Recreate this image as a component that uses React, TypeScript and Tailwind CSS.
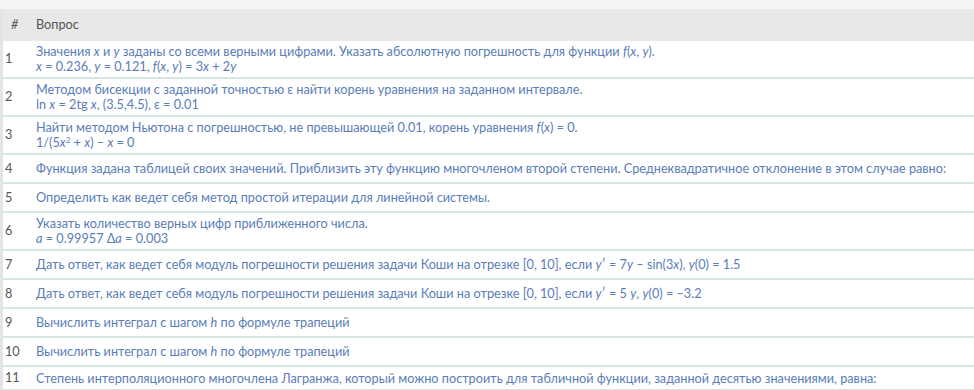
import React from "react";

type Q = { n: number; lines: React.ReactNode[] };

const I = ({ children }: { children: React.ReactNode }) => <i>{children}</i>;

const questions: Q[] = [
  {
    n: 1,
    lines: [
      <>Значения <I>x</I> и <I>y</I> заданы со всеми верными цифрами. Указать абсолютную погрешность для функции <I>f</I>(<I>x</I>, <I>y</I>).</>,
      <><I>x</I> = 0.236, <I>y</I> = 0.121, <I>f</I>(<I>x</I>, <I>y</I>) = 3<I>x</I> + 2<I>y</I></>,
    ],
  },
  {
    n: 2,
    lines: [
      <>Методом бисекции с заданной точностью ε найти корень уравнения на заданном интервале.</>,
      <>ln <I>x</I> = 2tg <I>x</I>, (3.5,4.5), ε = 0.01</>,
    ],
  },
  {
    n: 3,
    lines: [
      <>Найти методом Ньютона с погрешностью, не превышающей 0.01, корень уравнения <I>f</I>(<I>x</I>) = 0.</>,
      <>1/(5<I>x</I><sup className="text-[8px]">2</sup> + <I>x</I>) – <I>x</I> = 0</>,
    ],
  },
  {
    n: 4,
    lines: [
      <>Функция задана таблицей своих значений. Приблизить эту функцию многочленом второй степени. Среднеквадратичное отклонение в этом случае равно:</>,
    ],
  },
  { n: 5, lines: [<>Определить как ведет себя метод простой итерации для линейной системы.</>] },
  {
    n: 6,
    lines: [
      <>Указать количество верных цифр приближенного числа.</>,
      <><I>a</I> = 0.99957 Δ<I>a</I> = 0.003</>,
    ],
  },
  {
    n: 7,
    lines: [
      <>Дать ответ, как ведет себя модуль погрешности решения задачи Коши на отрезке [0, 10], если <I>y</I>′ = 7<I>y</I> – sin(3<I>x</I>), <I>y</I>(0) = 1.5</>,
    ],
  },
  {
    n: 8,
    lines: [
      <>Дать ответ, как ведет себя модуль погрешности решения задачи Коши на отрезке [0, 10], если <I>y</I>′ = 5 <I>y</I>, <I>y</I>(0) = –3.2</>,
    ],
  },
  { n: 9, lines: [<>Вычислить интеграл с шагом <I>h</I> по формуле трапеций</>] },
  { n: 10, lines: [<>Вычислить интеграл с шагом <I>h</I> по формуле трапеций</>] },
  {
    n: 11,
    lines: [
      <>Степень интерполяционного многочлена Лагранжа, который можно построить для табличной функции, заданной десятью значениями, равна:</>,
    ],
  },
];

export default function App() {
  return (
    <div className="h-[390px] w-[974px] overflow-hidden bg-white font-['Lato','Liberation_Sans',sans-serif] text-[12.7px]">
      <div className="h-[9px] bg-[#f5f5f5]" />
      <div className="border-l-[3px] border-[#e4e4e4]">
        {/* шапка */}
        <div className="flex h-[32px] items-center bg-[#e8e8e8] text-[#555]">
          <div className="w-[33px] pl-[8px] italic">#</div>
          <div>Вопрос</div>
        </div>

        {questions.map((q, idx) => (
          <div
            key={q.n}
            className={`flex items-center border-b-2 border-[#d9e5e2] ${
              q.lines.length > 1
                ? "h-[38px]"
                : idx === questions.length - 1
                  ? "h-[24px]"
                  : "h-[29px]"
            }`}
          >
            <div className="w-[33px] pl-[2px] text-[#555]">{q.n}</div>
            <div className="flex flex-col leading-[15px] text-[#5a7db8]">
              {q.lines.map((l, i) => (
                <div key={i} className="whitespace-nowrap">
                  {l}
                </div>
              ))}
            </div>
          </div>
        ))}
      </div>
    </div>
  );
}
